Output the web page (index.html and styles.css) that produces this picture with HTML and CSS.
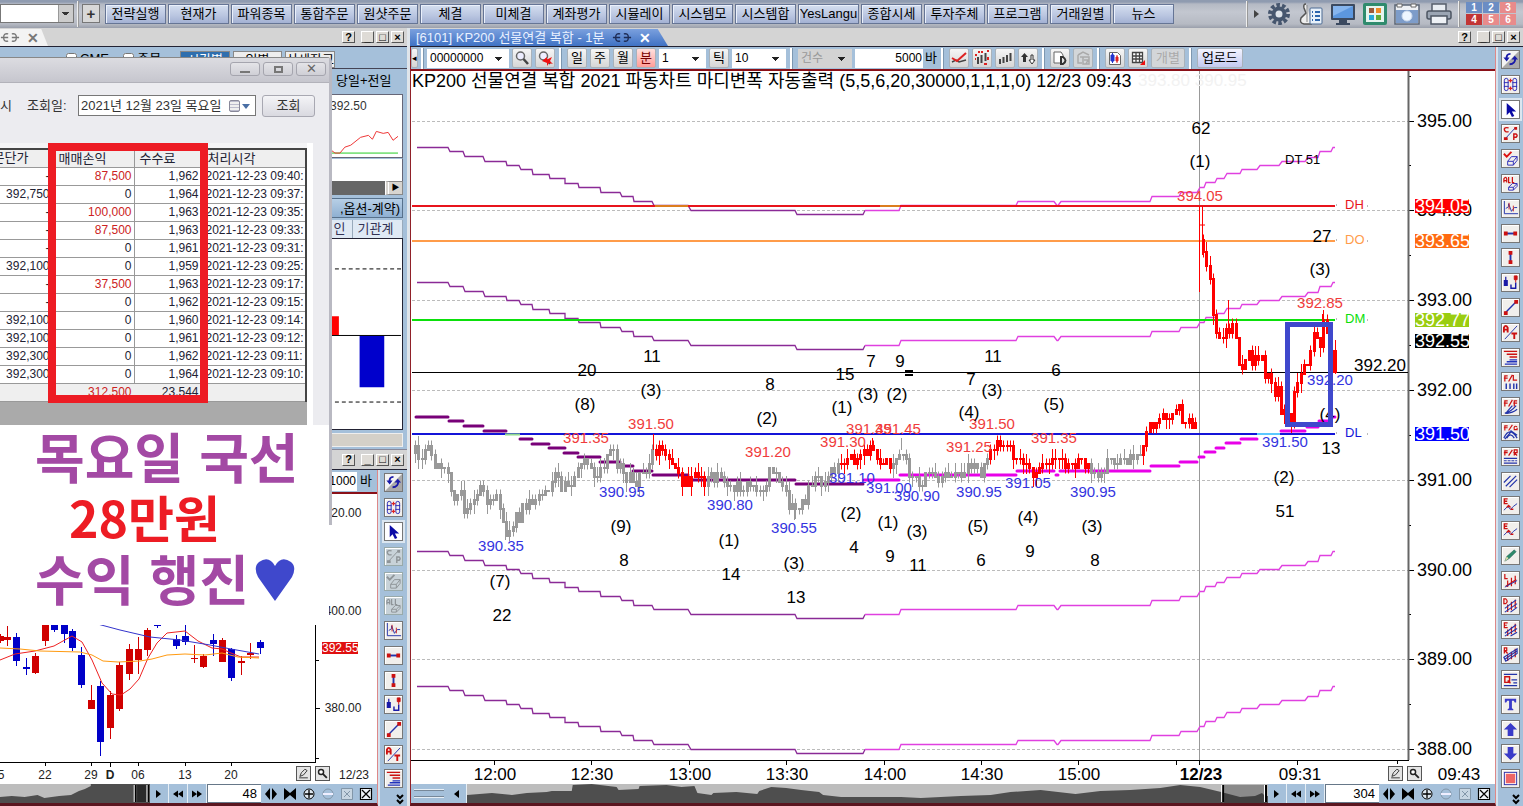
FILE: index.html
```html
<!DOCTYPE html>
<html lang="ko">
<head>
<meta charset="utf-8">
<title>[6101] KP200 선물연결 복합 - 1분</title>
<link rel="stylesheet" href="styles.css">
</head>
<body>
<svg class="sprite" aria-hidden="true">
  <symbol id="i-refresh" viewBox="0 0 18 18"><path d="M0 0H18L0 18Z" fill="#f4f4f4"/><path d="M18 0V18H0Z" fill="#aaa"/><path d="M9 3Q4 3 5 9" fill="none" stroke="#1a1aa8" stroke-width="2"/><path d="M1.500 7H8L5 11ZM10 9h7l-3.500-4Z" fill="#1a1aa8"/><path d="M14 8Q14 14 8 14" fill="none" stroke="#1a1aa8" stroke-width="2"/></symbol>
  <symbol id="i-link" viewBox="0 0 18 18"><g fill="none" stroke="#2b2bb8"><rect x="2.500" y="2.500" width="4" height="13" rx="2"/><rect x="11.500" y="2.500" width="4" height="13" rx="2"/><path d="M2 7h5M2 11h5M11 7h5M11 11h5"/></g><path d="M7 5h4M9 3v4M7 13h4M9 11v4" stroke="#d22" stroke-width="1.300" fill="none"/></symbol>
  <symbol id="i-cursor" viewBox="0 0 18 18"><path d="M5 2V15L8 12L10.500 17L13 16L10.500 11H15Z" fill="#0a0aa5"/></symbol>
  <symbol id="i-cp" viewBox="0 0 18 18"><path d="M3 15L14 3" stroke="#23a"/><path d="M2 13h4v3H2zM13 2h3v3h-3z" fill="#c11"/><path d="M7 3Q2 2 2.500 5T7 7M12.500 16V9.500H15q2 1.500 0 3.500h-2" fill="none" stroke="#c11" stroke-width="1.500"/></symbol>
  <symbol id="i-erasecheck" viewBox="0 0 18 18"><path d="M6 12L10 7H16V11L12 16H6ZM6 12H12L16 7M12 12v4" fill="none" stroke="#2b2bb8"/><path d="M2 4L5 7L10 2" fill="none" stroke="#d11" stroke-width="2"/></symbol>
  <symbol id="i-eraseall" viewBox="0 0 18 18"><path d="M7 13L11 9H16V12L12 16H7ZM7 13H12L16 9M12 13v3" fill="none" stroke="#2b2bb8"/><path d="M2 8V4q2-3 3 0v4M2 6h3M7 2v6h2M11 2v6h2" fill="none" stroke="#c11" stroke-width="1.300"/></symbol>
  <symbol id="i-axis" viewBox="0 0 18 18"><path d="M2.500 1V14.500H17M4 9L7 7V4L10 12L13 8H16" fill="none" stroke="#23a"/><path d="M7.500 3v7M12 6v6" stroke="#c22"/></symbol>
  <symbol id="i-hseg" viewBox="0 0 18 18"><path d="M3 9H15" stroke="#23a" stroke-width="2"/><path d="M2 7h4v4H2zM12 7h4v4h-4z" fill="#c11"/></symbol>
  <symbol id="i-vseg" viewBox="0 0 18 18"><path d="M9 3V15" stroke="#23a" stroke-width="2"/><path d="M7 2h4v4H7zM7 12h4v4H7z" fill="#c11"/></symbol>
  <symbol id="i-ohlc" viewBox="0 0 18 18"><path d="M4 3V12M2.500 7H5.500V12H2.500Z" stroke="#1a1aa8" fill="#1a1aa8" stroke-width="1.300"/><path d="M9.500 11V15H14.500V9" stroke="#1a1aa8" fill="none" stroke-width="1.500"/><path d="M13 2h3v4h-3zM14.500 6v3" fill="#c11" stroke="#c11"/></symbol>
  <symbol id="i-diag" viewBox="0 0 18 18"><path d="M3 15L15 3" stroke="#23a" stroke-width="1.500"/><path d="M2 13h4v4H2zM13 1h4v4h-4z" fill="#c11"/></symbol>
  <symbol id="i-at" viewBox="0 0 18 18"><path d="M3 16L16 2" stroke="#23a"/><path d="M2 9V4Q4 0 6 4V9M2 6H6M10 10H16M13 10V16" fill="none" stroke="#c11" stroke-width="2"/></symbol>
  <symbol id="i-fib" viewBox="0 0 18 18"><path d="M2 2.500H16M5 5.500H16M8 8.500H16" stroke="#c11" stroke-width="1.500"/><path d="M8 11.500H16M5 13.500H16M3 16H16" stroke="#23b" stroke-width="1.500"/></symbol>
  <symbol id="i-fl" viewBox="0 0 18 18"><path d="M3 9V3H6M2 5.500H6M7 9L11 2M12 2V7.500H16" fill="none" stroke="#c11" stroke-width="1.300"/><path d="M4.500 11V17M8.500 11V17M12.500 11V17M15.500 11V17" stroke="#23a" stroke-width="1.500"/></symbol>
  <symbol id="i-ff" viewBox="0 0 18 18"><path d="M3 9V3H6M2 5.500H6M7 9L11 2M13 9V3H16M12 5.500H16" fill="none" stroke="#c11" stroke-width="1.300"/><path d="M3 16Q9 15 15 8M3 16Q10 17 16 12M5 15L11 8" fill="none" stroke="#23a" stroke-width="1.300"/></symbol>
  <symbol id="i-fc" viewBox="0 0 18 18"><path d="M3 8V3H6M2 5H6M7 8L11 2M16 4q-4-2-3 3h3V5" fill="none" stroke="#c11" stroke-width="1.200"/><path d="M2 16Q8 3 16 16M5 16Q9 9 13 16M9 10L3 17M9 8L16 13" fill="none" stroke="#23a" stroke-width="1.300"/></symbol>
  <symbol id="i-fr" viewBox="0 0 18 18"><path d="M3 8V3H6M2 5H6M7 8L11 2M13 8V2H16V5H13L16 8" fill="none" stroke="#c11" stroke-width="1.300"/><path d="M2 11H16M2 16H16" stroke="#23a" stroke-width="1.500"/><path d="M2 13.500H16" stroke="#23a" stroke-dasharray="3 1"/></symbol>
  <symbol id="i-channel" viewBox="0 0 18 18"><path d="M2 10L9 3M4 14L15 3M8 15L16 7" stroke="#23a" stroke-width="1.300"/></symbol>
  <symbol id="i-ewave" viewBox="0 0 18 18"><path d="M2 14L6 10L9 13L12 10L16 7" fill="none" stroke="#23a"/><path d="M6 2H2.500V7H6M2.500 4.500H5.500M5 11l2-2 2 2M9 13h3" fill="none" stroke="#c11" stroke-width="1.500"/></symbol>
  <symbol id="i-pencil" viewBox="0 0 18 18"><path d="M3 15L5 10L13 3L15 5L8 12Z" fill="#2d8a6a" stroke="#255" stroke-width=".5"/><path d="M3 15L5 10L7 12Z" fill="#dda"/></symbol>
  <symbol id="i-lline" viewBox="0 0 18 18"><path d="M3 2V7H6M4 15L15 8M6 9V16M10 6V15M14 4V13" fill="none" stroke="#c11" stroke-width="1.300"/><path d="M3 16L16 9" stroke="#23a"/></symbol>
  <symbol id="i-dline" viewBox="0 0 18 18"><path d="M2 2V7H4Q7 4.500 4 2ZM6 8V16M10 5V14M14 3V12" fill="none" stroke="#c11" stroke-width="1.300"/><path d="M3 12L15 3M3 16L16 7M9 16L16 11" stroke="#23a" stroke-width="1.200"/></symbol>
  <symbol id="i-eline" viewBox="0 0 18 18"><path d="M6 2H2.500V7H6M2.500 4.500H5M6 9V16M10 6V14M14 3V12" fill="none" stroke="#c11" stroke-width="1.300"/><path d="M3 13L15 4M3 16L16 8M9 16L16 12" stroke="#23a" stroke-width="1.200"/></symbol>
  <symbol id="i-rline" viewBox="0 0 18 18"><path d="M2.500 8V2H5V5H3L6 8M6 9V16M10 6V14M14 3V12" fill="none" stroke="#c11" stroke-width="1.300"/><path d="M2 12L16 3V8L4 16Z M3 14L16 5" fill="none" stroke="#23a" stroke-width="1.200"/></symbol>
  <symbol id="i-quad" viewBox="0 0 18 18"><path d="M2 3.500H16M10 9.500H16M2 15.500H16M12 12.500H16" stroke="#23a" stroke-width="1.300"/><path d="M3 6H8V12H3ZM6 10L9 13" fill="none" stroke="#c11" stroke-width="1.500"/></symbol>
  <symbol id="i-text" viewBox="0 0 18 18"><path d="M3 3H15V7H13.500L12.500 5H10.500V13L12 14V15H6V14L7.500 13V5H5.500L4.500 7H3Z" fill="#3b3bc8"/></symbol>
  <symbol id="i-up" viewBox="0 0 18 18"><path d="M9 2L16 9H12V16H6V9H2Z" fill="#3b3bc8"/></symbol>
  <symbol id="i-down" viewBox="0 0 18 18"><path d="M9 16L16 9H12V2H6V9H2Z" fill="#3b3bc8"/></symbol>
  <symbol id="i-rect" viewBox="0 0 18 18"><rect x="2.500" y="2.500" width="13" height="13" fill="#fff" stroke="#33a"/><rect x="4" y="4" width="10" height="10" fill="#e66"/></symbol>
  <symbol id="i-search" viewBox="0 0 18 18"><circle cx="7.500" cy="7" r="4" fill="#eef" stroke="#666" stroke-width="1.500"/><path d="M10.500 10L15 15" stroke="#444" stroke-width="2.500"/></symbol>
  <symbol id="i-searchred" viewBox="0 0 18 18"><circle cx="7.500" cy="7" r="4" fill="#eef" stroke="#666" stroke-width="1.500"/><path d="M10 10L14 15" stroke="#444" stroke-width="2"/><path d="M6 12L11 8V10.500L16 8L14 12L17 15L13 14L11 17V14Z" fill="#e11"/></symbol>
  <symbol id="i-trend" viewBox="0 0 18 18"><path d="M2 13L6 11L9 13L16 11" fill="none" stroke="#444" stroke-width="1.500"/><path d="M2 9L7 12L16 4" fill="none" stroke="#d22" stroke-width="2"/></symbol>
  <symbol id="i-barsred" viewBox="0 0 18 18"><path d="M5 8V15M8.500 6V14M12.500 4V12" stroke="#444" stroke-width="2"/><path d="M2 6h2M5 3h2M8 3h2M2 10h1M14 2h2M11 15h3M15 8v3" stroke="#d22" stroke-width="2"/></symbol>
  <symbol id="i-bars" viewBox="0 0 18 18"><path d="M4 10V15M7.500 8V14M11 6V13M14.500 4V12" stroke="#444" stroke-width="2"/></symbol>
  <symbol id="i-updown" viewBox="0 0 18 18"><path d="M2 8L5.500 4L9 8H7V13H4V8Z" fill="#333"/><path d="M10 11L13 15L16 11H14V6H12V11Z" fill="#fff" stroke="#333"/></symbol>
  <symbol id="i-docd" viewBox="0 0 18 18"><path d="M9 14H3V3H10L12 6V8" fill="#fff" stroke="#666"/><path d="M10 8V15H12Q17 11.500 12 8Z" fill="none" stroke="#333" stroke-width="2"/></symbol>
  <symbol id="i-docr" viewBox="0 0 18 18"><path d="M4 6L9 3L15 6M4 6V14H8M6 8H15V15H9V8M10 11H14L12 15" fill="none" stroke="#aaa" stroke-width="1.500"/></symbol>
  <symbol id="i-candles" viewBox="0 0 18 18"><path d="M3.500 3.500H11.500L14.500 6.500V15.500H3.500Z" fill="#fff" stroke="#666"/><path d="M5 6H8V12H5ZM6.500 4V14" stroke="#23c" fill="#23c"/><path d="M10 8H12V12H10ZM11 6V14" stroke="#d22" fill="#d22"/></symbol>
  <symbol id="i-grid" viewBox="0 0 18 18"><path d="M3.500 3.500H13.500V13.500H3.500ZM3.500 7H13.500M3.500 10H13.500M7 3.500V13.500M10.500 3.500V13.500" fill="#fff" stroke="#444" stroke-width="1.300"/><path d="M16 11V16H11Z" fill="#e11"/></symbol>
  <symbol id="i-play" viewBox="0 0 18 18"><path d="M6 5L11 9L6 13Z" fill="#000"/></symbol>
  <symbol id="i-back" viewBox="0 0 18 18"><path d="M11 5L6 9L11 13Z" fill="#000"/></symbol>
  <symbol id="i-rew" viewBox="0 0 18 18"><path d="M9 5.500L4 9L9 12.500ZM14 5.500L9 9L14 12.500Z" fill="#000"/></symbol>
  <symbol id="i-fwd" viewBox="0 0 18 18"><path d="M4 5.500L9 9L4 12.500ZM9 5.500L14 9L9 12.500Z" fill="#000"/></symbol>
  <symbol id="i-expand" viewBox="0 0 18 18"><path d="M8 3V15L3 9ZM10 3V15L15 9Z" fill="#000"/></symbol>
  <symbol id="i-shrink" viewBox="0 0 18 18"><path d="M3 3V15L9 10L15 15V3L9 8Z" fill="#000"/></symbol>
  <symbol id="i-plus" viewBox="0 0 18 18"><circle cx="9" cy="9" r="5" fill="#dfe8f0" stroke="#000"/><path d="M5 9H13M9 5V13" stroke="#000" stroke-width="1.300"/></symbol>
  <symbol id="i-minus" viewBox="0 0 18 18"><circle cx="9" cy="9" r="5" fill="none" stroke="#8296a8"/><path d="M4 9H14" stroke="#eef" stroke-width="2"/></symbol>
  <symbol id="i-fit" viewBox="0 0 18 18"><path d="M3.500 3.500H14.500V14.500H3.500ZM6 6L12 12M12 6L6 12" fill="#c8d6e2" stroke="#8296a8"/></symbol>
  <symbol id="i-close" viewBox="0 0 18 18"><path d="M3.500 3.500H14.500V14.500H3.500ZM5 5L13 13M13 5L5 13" fill="#eef3f8" stroke="#000" stroke-width="1.200"/></symbol>
  <symbol id="i-edit" viewBox="0 0 18 18"><path d="M3 15H15M4 13L6 8L11 3L14 5L9 11Z" fill="none" stroke="#333" stroke-width="1.300"/></symbol>
  <symbol id="i-key" viewBox="0 0 18 18"><circle cx="7" cy="7" r="3.500" fill="#fff" stroke="#222" stroke-width="2"/><path d="M9.500 9.500L15 15" stroke="#222" stroke-width="2.500"/></symbol>
  <symbol id="i-docks" viewBox="0 0 22 12"><path d="M1 6H5M9 2Q4 1 4 6Q4 11 9 10M5 6H9M13 2Q18 1 18 6Q18 11 13 10M13 6H21" fill="none" stroke="currentColor" stroke-width="1.500"/></symbol>
</svg>

<header class="topbar">
  <select class="top-combo" aria-label="종목"><option></option></select>
  <span class="rule"></span>
  <button class="plus" type="button">+</button>
  <nav class="menu">
    <button type="button">전략실행</button><button type="button">현재가</button><button type="button">파워종목</button><button type="button">통합주문</button><button type="button">원샷주문</button><button type="button">체결</button><button type="button">미체결</button><button type="button">계좌평가</button><button type="button">시뮬레이</button><button type="button">시스템모</button><button type="button">시스템합</button><button type="button">YesLangu</button><button type="button">종합시세</button><button type="button">투자주체</button><button type="button">프로그램</button><button type="button">거래원별</button><button type="button">뉴스</button>
  </nav>
  <div class="utils">
    <span class="rule"></span>
    <svg class="more" viewBox="0 0 6 10"><path d="M0 1L5 5L0 9Z" fill="#444"/></svg>
    <button type="button" aria-label="설정"><svg viewBox="0 0 26 24"><circle cx="13" cy="12" r="9" fill="none" stroke="#46566e" stroke-width="4" stroke-dasharray="3.500 2.150"/><circle cx="13" cy="12" r="5.500" fill="#dde3ea" stroke="#46566e" stroke-width="4"/></svg></button>
    <button type="button" aria-label="목록"><svg viewBox="0 0 26 24"><path d="M8 2Q5 2 6 6L8 11L3 16Q1 21 6 22H14" fill="#eee" stroke="#555" stroke-width="1.500"/><path d="M9 3V20" stroke="#888"/><rect x="12" y="6" width="12" height="16" rx="1" fill="#e8f1fa" stroke="#4c6b93"/><path d="M14 10h1M14 14h1M14 18h1M17 10h5M17 14h5M17 18h5" stroke="#2c65ad" stroke-width="2"/></svg></button>
    <button type="button" aria-label="모니터"><svg viewBox="0 0 26 24"><rect x="1" y="2" width="24" height="16" rx="1" fill="#3c4a60"/><rect x="3" y="4" width="20" height="12" fill="#5c97df"/><path d="M3 4H23L3 14Z" fill="#86b5ee"/><path d="M9 18H17V21H20V23H6V21H9Z" fill="#3c4a60"/></svg></button>
    <button type="button" aria-label="화면 배치"><svg viewBox="0 0 26 24"><rect x="1" y="1" width="24" height="22" rx="2" fill="#2f8b6d"/><rect x="4" y="4" width="18" height="16" fill="#e6f5ef"/><rect x="7" y="6" width="5" height="5" fill="#9a5a3a"/><rect x="14" y="6" width="5" height="5" fill="#f08b28"/><rect x="7" y="13" width="5" height="5" fill="#27a9d8"/><rect x="14" y="13" width="5" height="5" fill="#63ad38"/></svg></button>
    <button type="button" aria-label="캡처"><svg viewBox="0 0 26 24"><rect x="1" y="3" width="24" height="19" fill="#eef1f5" stroke="#5b6575" stroke-width="1.500"/><rect x="2" y="8" width="22" height="13" fill="#7d9cc9"/><path d="M3 2h5v3H3zM17 2h5v3h-5z" fill="#fff" stroke="#666"/><circle cx="13" cy="14" r="5" fill="#eef6ff" stroke="#cbd9ec"/></svg></button>
    <button type="button" aria-label="인쇄"><svg viewBox="0 0 26 24"><path d="M6 2H20V10H6Z" fill="#e9edf2" stroke="#555e6b" stroke-width="1.500"/><rect x="1" y="9" width="24" height="8" rx="2" fill="#9ba5b3" stroke="#4d5663" stroke-width="1.500"/><path d="M5 14H21V22H5Z" fill="#eef1f5" stroke="#4d5663" stroke-width="1.500"/></svg></button>
    <span class="rule"></span>
    <div class="pages"><button type="button" class="b">1</button><button type="button" class="b">2</button><button type="button">3</button><button type="button" class="on">4</button><button type="button">5</button><button type="button">6</button></div>
  </div>
</header>

<main class="desk">
  <section class="left">
    <div class="win upper">
      <div class="strip">
        <div class="tab plain"><svg class="dock"><use href="#i-docks"/></svg><b>✕</b></div>
        <div class="sys"><button type="button">?</button><button type="button">_</button><button type="button">□</button><button type="button">×</button></div>
      </div>
      <div class="opts">
        <label><input type="checkbox">CME</label><label><input type="checkbox">주문</label>
        <button type="button" class="sel">시간별</button><button type="button">일별</button><button type="button">상세잔고</button>
      </div>
      <div class="side">
        <p class="when">당일+전일</p>
        <div class="spark"><span>392.50</span><svg viewBox="0 0 72 63"><path d="M0 59H68" stroke="#2c2"/><path d="M0 56L4 59H9L14 53L20 51L30 43L38 41L42 45L46 37L53 39L58 38L63 46L68 42" fill="none" stroke="#e33"/></svg></div>
        <div class="blank"></div>
        <div class="hscroll"><button type="button">▶</button></div>
        <p class="cap">,옵션-계약)</p>
        <div class="heads"><span>인</span><span>기관계</span></div>
        <svg class="flow" viewBox="0 0 72 192"><path d="M4 30H71M4 165H71" stroke="#000" stroke-dasharray="4 3"/><path d="M0 97.500H71" stroke="#000"/><path d="M0 78H8V97H0Z" fill="#f00"/><path d="M29 98H54V150H29Z" fill="#00c"/></svg>
      </div>
      <div class="foot"></div>
    </div>

    <div class="win lower">
      <div class="strip">
        <div class="sys"><button type="button">?</button><button type="button">_</button><button type="button">□</button><button type="button">×</button></div>
      </div>
      <div class="split">
        <div class="pane">
          <div class="bar end"><input class="num" aria-label="봉 개수" value="1000"><span>바</span></div>
          <div class="plot">
            <svg id="daily" viewBox="0 494 377 290" preserveAspectRatio="xMinYMin meet" role="img" aria-label="일봉 차트"></svg>
            <div class="tools"><button type="button" aria-label="편집"><svg><use href="#i-edit"/></svg></button><button type="button" aria-label="키"><svg><use href="#i-key"/></svg></button></div>
          </div>
          <div class="navbar">
            <svg class="over" viewBox="0 0 152 19" preserveAspectRatio="none"><path d="M0 0H152V19H0Z" fill="#bdbdbd"/><path d="M0 13L12 12L25 13L38 11L45 14L60 12L72 11L80 7L86 5L92 2V0H152V19H0Z" fill="#4e4e4e"/><path d="M139 1H148V18H139Z" fill="#2a2a2a"/><path d="M137 1V18M150 1V18" stroke="#000" stroke-width="2"/><path d="M136 1V18M149 1V18" stroke="#fff"/></svg>
            <button type="button" aria-label="재생"><svg><use href="#i-play"/></svg></button><button type="button" aria-label="뒤로"><svg><use href="#i-rew"/></svg></button><button type="button" aria-label="앞으로"><svg><use href="#i-fwd"/></svg></button>
            <input aria-label="표시 개수" value="48">
            <div class="zoom"><button type="button" aria-label="넓게"><svg><use href="#i-expand"/></svg></button><button type="button" aria-label="좁게"><svg><use href="#i-shrink"/></svg></button><button type="button" aria-label="확대"><svg><use href="#i-plus"/></svg></button><button type="button" aria-label="축소"><svg><use href="#i-minus"/></svg></button><button type="button" aria-label="맞춤"><svg><use href="#i-fit"/></svg></button><button type="button" aria-label="닫기"><svg><use href="#i-close"/></svg></button></div>
          </div>
        </div>
        <aside class="rail" id="rail-left"></aside>
      </div>
    </div>

    <div class="dialog">
      <div class="title"><button type="button" aria-label="최소화"><i class="g-min"></i></button><button type="button" aria-label="최대화"><i class="g-max"></i></button><button type="button" aria-label="닫기">✕</button></div>
      <div class="query"><span class="cut">시</span><label for="day">조회일:</label><div class="date"><input id="day" value="2021년 12월 23일 목요일"><i class="cal"></i><i class="arrow"></i></div><button type="button">조회</button></div>
      <div class="sheet">
        <table>
          <colgroup><col class="c1"><col class="c2"><col class="c3"><col class="c4"></colgroup>
          <thead><tr><th>문단가</th><th>매매손익</th><th>수수료</th><th>처리시각</th></tr></thead>
          <tbody>
            <tr><td>-</td><td class="up">87,500</td><td>1,962</td><td>2021-12-23 09:40:</td></tr>
            <tr><td>392,750</td><td>0</td><td>1,964</td><td>2021-12-23 09:37:</td></tr>
            <tr><td>-</td><td class="up">100,000</td><td>1,963</td><td>2021-12-23 09:35:</td></tr>
            <tr><td>-</td><td class="up">87,500</td><td>1,963</td><td>2021-12-23 09:33:</td></tr>
            <tr><td>-</td><td>0</td><td>1,961</td><td>2021-12-23 09:31:</td></tr>
            <tr><td>392,100</td><td>0</td><td>1,959</td><td>2021-12-23 09:25:</td></tr>
            <tr><td>-</td><td class="up">37,500</td><td>1,963</td><td>2021-12-23 09:17:</td></tr>
            <tr><td>-</td><td>0</td><td>1,962</td><td>2021-12-23 09:15:</td></tr>
            <tr><td>392,100</td><td>0</td><td>1,960</td><td>2021-12-23 09:14:</td></tr>
            <tr><td>392,100</td><td>0</td><td>1,961</td><td>2021-12-23 09:12:</td></tr>
            <tr><td>392,300</td><td>0</td><td>1,962</td><td>2021-12-23 09:11:</td></tr>
            <tr><td>392,300</td><td>0</td><td>1,964</td><td>2021-12-23 09:10:</td></tr>
          </tbody>
          <tfoot><tr><td></td><td class="up">312,500</td><td>23,544</td><td></td></tr></tfoot>
        </table>
      </div>
    </div>
    <div class="mark"></div>
    <div class="note">
      <p>목요일 국선</p>
      <p class="red">28만원</p>
      <p>수익 행진<svg viewBox="0 0 40 42"><path d="M20 42Q10 28 3 18Q-2 8 4 3Q14-4 20 7Q26-4 36 3Q42 8 37 18Q30 28 20 42Z" fill="#3f48cc"/></svg></p>
    </div>
  </section>

  <section class="right">
    <div class="strip">
      <div class="tab active">[6101] KP200 선물연결 복합 - 1분<svg class="dock"><use href="#i-docks"/></svg><b>✕</b></div>
      <div class="sys"><button type="button">?</button><button type="button">_</button><button type="button">□</button><button type="button">×</button></div>
    </div>
    <div class="split">
      <div class="pane">
        <div class="bar">
          <button type="button" class="slim">◂</button>
          <i class="sep"></i>
          <select class="w82" aria-label="종목코드"><option>00000000</option></select>
          <button type="button" aria-label="검색"><svg><use href="#i-search"/></svg></button>
          <button type="button" aria-label="빠른 검색"><svg><use href="#i-searchred"/></svg></button>
          <i class="sep"></i>
          <button type="button">일</button><button type="button">주</button><button type="button">월</button><button type="button" class="on">분</button>
          <select class="w48" aria-label="분 주기"><option>1</option></select>
          <button type="button">틱</button>
          <select class="w54" aria-label="틱 주기"><option>10</option></select>
          <i class="sep"></i>
          <select class="w54 off" aria-label="건수" disabled><option>건수</option></select>
          <div class="pair"><input class="num" aria-label="봉 개수" value="5000"><span>바</span></div>
          <i class="sep"></i>
          <button type="button" aria-label="추세"><svg><use href="#i-trend"/></svg></button><button type="button" aria-label="지표"><svg><use href="#i-barsred"/></svg></button><button type="button" aria-label="봉"><svg><use href="#i-bars"/></svg></button><button type="button" aria-label="정렬"><svg><use href="#i-updown"/></svg></button>
          <i class="sep"></i>
          <button type="button" aria-label="문서"><svg><use href="#i-docd"/></svg></button><button type="button" aria-label="기록" disabled><svg><use href="#i-docr"/></svg></button>
          <i class="sep"></i>
          <button type="button" aria-label="캔들"><svg><use href="#i-candles"/></svg></button><button type="button" aria-label="격자"><svg><use href="#i-grid"/></svg></button>
          <button type="button" class="wide" disabled>개별</button>
          <i class="sep"></i>
          <button type="button" class="wide blue">업로드</button>
        </div>
        <div class="plot">
          <svg id="minute" viewBox="411 71 1084 713" preserveAspectRatio="xMinYMin meet" role="img" aria-label="KP200 1분 차트"></svg>
          <div class="tools"><button type="button" aria-label="편집"><svg><use href="#i-edit"/></svg></button><button type="button" aria-label="키"><svg><use href="#i-key"/></svg></button></div>
        </div>
        <div class="navbar">
          <i class="grip"></i><button type="button" aria-label="이전"><svg><use href="#i-back"/></svg></button>
          <svg class="over" viewBox="465 784 803 19" preserveAspectRatio="none"><path d="M465 784H1268V803H465Z" fill="#bdbdbd"/><path d="M465 795L490 793L510 795L525 793L545 792L550 791L570 791L571 785L590 784L615 787L617 790L637 789L638 786L665 785L680 787L693 786L696 793L710 795L712 793L735 792L756 794L758 791L770 787L785 788L800 790L818 792L822 795L840 797L870 797L900 797L920 798L960 796L990 795L1010 792L1040 790L1075 794L1100 791L1130 790L1160 788L1180 785L1200 787L1221 792L1240 797L1255 796L1262 793L1265 796H1268V803H465Z" fill="#4e4e4e"/><path d="M1224 785H1264V803H1224Z" fill="#2a2a2a" opacity=".35"/><path d="M1223 785V802M1266 785V802" stroke="#000" stroke-width="2"/><path d="M1221.500 785V802M1264.500 785V802" stroke="#fff"/></svg>
          <button type="button" aria-label="재생"><svg><use href="#i-play"/></svg></button><button type="button" aria-label="뒤로"><svg><use href="#i-rew"/></svg></button><button type="button" aria-label="앞으로"><svg><use href="#i-fwd"/></svg></button>
          <input aria-label="표시 개수" value="304">
          <div class="zoom"><button type="button" aria-label="넓게"><svg><use href="#i-expand"/></svg></button><button type="button" aria-label="좁게"><svg><use href="#i-shrink"/></svg></button><button type="button" aria-label="확대"><svg><use href="#i-plus"/></svg></button><button type="button" aria-label="축소"><svg><use href="#i-minus"/></svg></button><button type="button" aria-label="맞춤"><svg><use href="#i-fit"/></svg></button><button type="button" aria-label="닫기"><svg><use href="#i-close"/></svg></button></div>
        </div>
      </div>
      <aside class="rail" id="rail-right"></aside>
    </div>
  </section>
</main>
<script src="app.js"></script>
</body>
</html>
```

FILE: styles.css
```css
* { box-sizing: border-box; }
body {
  margin: 0; height: 100vh; display: flex; flex-direction: column; overflow: hidden;
  background: #d4d4d4; color: #000;
  font: 13px/16px "Liberation Sans", "Noto Sans CJK KR", sans-serif;
}
p { margin: 0; }
button, input, select { font: inherit; color: inherit; margin: 0; padding: 0; border-radius: 0; }
button { display: flex; align-items: center; justify-content: center; white-space: nowrap; }
.sprite { position: absolute; width: 0; height: 0; }

.topbar {
  flex: none; height: 28px; display: flex; align-items: center; padding-bottom: 1px;
  background: linear-gradient(#8f9bb0 0 2px, #b4b9c4 4px, #c3c7d0 12px, #b6bac3 24px, #9a9fab);
}
.rule { width: 2px; height: 26px; background: #eee; border-right: 1px solid #999; }
.top-combo {
  appearance: none; width: 74px; height: 19px; border: 1px solid #777; margin-right: 3px;
  background: linear-gradient(#333, #333) 61px 7px / 7px 1px no-repeat, linear-gradient(#333, #333) 62px 8px / 5px 1px no-repeat, linear-gradient(#333, #333) 63px 9px / 3px 1px no-repeat, linear-gradient(90deg, #fff 57px, #999 57px 58px, #ccc 58px);
}
.plus { width: 18px; height: 19px; margin: 0 5px 0 3px; background: #d8d8d8; border: 1px solid #777; font-weight: bold; font-size: 15px; color: #333; }
.menu { display: flex; gap: 2px; }
.menu button {
  width: 61px; height: 20px; overflow: hidden; border: 1px solid #667595; box-shadow: inset 1px 1px #eaf0fb;
  background: linear-gradient(#d5dff0, #b9c5e0 60%, #a3b1d3);
}
.utils { margin-left: auto; display: flex; align-items: center; gap: 6px; padding-right: 7px; }
.utils > button { width: 26px; height: 24px; border: 0; background: none; }
.utils svg { width: 26px; height: 24px; }
.utils .more { width: 6px; height: 10px; }
.pages { display: grid; grid-template-columns: repeat(3, 16px); gap: 1px; }
.pages button { height: 11px; border: 0; background: #e88b8b; color: #fff; font-size: 10px; line-height: 11px; font-weight: bold; }
.pages .b { background: #6b8dc4; }
.pages .on { background: #c23535; }

.desk { flex: 1; min-height: 0; display: flex; }
.left { flex: none; width: 410px; position: relative; display: flex; flex-direction: column; overflow: hidden; border-right: 3px solid #dfe5ea; box-shadow: inset -1px 0 #4a5a6a; }
.right { flex: 1; min-width: 0; display: flex; flex-direction: column; }
.strip { flex: none; height: 19px; display: flex; align-items: flex-end; background: #d4d4d4; border-bottom: 1px solid #223; }
.sys { margin-left: auto; display: flex; gap: 2px; align-self: center; padding-right: 3px; }
.sys button { width: 13px; height: 12px; background: #dedbd6; border: 1px solid; border-color: #fff #555 #555 #fff; font-size: 11px; line-height: 9px; font-weight: bold; }
.sys button:first-child { margin-right: 4px; }
.tab { height: 17px; display: flex; align-items: center; white-space: nowrap; }
.tab b { font-size: 14px; }
.dock { width: 20px; height: 11px; }
.plain { width: 48px; gap: 7px; background: #f3f3f3; clip-path: polygon(0 0, 86% 0, 100% 100%, 0 100%); color: #777; }
.active { width: 258px; padding-left: 6px; gap: 7px; color: #e9f1ff; background: linear-gradient(#7ba0de, #3f72c4); clip-path: polygon(0 0, 96% 0, 100% 100%, 0 100%); }
.active b { color: #fff; }
.active .dock { color: #1e2c55; }

.win { display: flex; flex-direction: column; }
.upper { flex: none; background: #a5c0da; }
.opts { height: 22px; padding: 4px 72px 0 66px; display: flex; gap: 3px; border-bottom: 1px solid #445; }
.opts label { display: flex; gap: 3px; width: 55px; }
.opts input { width: 11px; height: 11px; margin: 2px 0; }
.opts button { width: 50px; border: 1px solid #888; background: #eee; }
.opts .sel { background: #2f6fae; color: #fff; }
.side { margin: 0 4px 0 331px; display: flex; flex-direction: column; }
.when { height: 25px; padding: 4px 5px; white-space: nowrap; }
.spark { height: 64px; background: #fff; border: 1px solid #667; border-left: 0; position: relative; }
.spark span { position: absolute; top: 3px; left: -1px; font-size: 12px; color: #333; }
.spark svg { display: block; width: 100%; height: 62px; }
.blank { height: 23px; background: #fff; border-right: 1px solid #667; border-top: 1px solid #a5c0da; }
.hscroll { height: 14px; display: flex; justify-content: flex-end; background: #666; }
.hscroll button { width: 18px; border: 1px solid #888; border-left: 4px double #fff; background: #d8d5d0; font-size: 8px; }
.cap { height: 20px; margin-top: 3px; padding: 2px; border: 1px solid #57718c; border-left: 0; background: linear-gradient(#b7cfe6, #8fb0d2); white-space: nowrap; text-align: right; }
.heads { display: grid; grid-template-columns: 22px 1fr; height: 20px; padding-top: 2px; }
.heads span { background: #dfe9f4; border-right: 1px solid #9ab; padding: 1px 4px 0 0; text-align: center; white-space: nowrap; color: #335; }
.flow { display: block; width: 100%; height: 192px; background: #fff; border: 1px solid #223; border-left: 0; }
.foot { height: 14px; margin: 3px 4px 2px 0; background: #d4d0c8; border: 1px solid #eee; }
.lower { flex: 1; min-height: 0; }
.lower .strip { height: 21px; border-top: 1px solid #889; }

.split { flex: 1; min-height: 0; display: flex; background: #a5c0da; }
.pane { flex: 1; min-width: 0; display: flex; flex-direction: column; border-right: 1px solid #d88; border-bottom: 3px solid #5b1620; border-left: 1px solid #902028; }
.left .pane { border-left: 0; }
.bar { flex: none; height: 24px; display: flex; align-items: center; gap: 3px; border-bottom: 2px solid #8a1018; white-space: nowrap; }
.bar.end { justify-content: flex-end; padding-right: 5px; }
.bar button { width: 20px; height: 20px; border: 1px solid #a9b2ba; border-radius: 2px; background: linear-gradient(#f6f6f6, #d6d6d6); }
.bar button svg { width: 18px; height: 18px; }
.bar button:disabled { color: #aaa; background: #d3d6d9; }
.bar .slim { width: 7px; font-size: 9px; }
.bar .on { background: linear-gradient(#ffe0de, #ff9d98); color: #700; }
.bar .wide { width: auto; padding: 0 4px; }
.bar .blue { background: linear-gradient(#f3f4ff, #c3c9f0); }
.sep { width: 3px; height: 21px; margin: 0 2px 0 1px; background: #fff; border-right: 1px solid #7d97b0; }
.slim + .sep { margin: 0; }
.bar select { appearance: none; height: 19px; padding-left: 3px; border: 0; font-size: 12px; background: linear-gradient(#222, #222) right 7px top 8px / 7px 1px no-repeat, linear-gradient(#222, #222) right 8px top 9px / 5px 1px no-repeat, linear-gradient(#222, #222) right 9px top 10px / 3px 1px no-repeat, linear-gradient(#222, #222) right 10px top 11px / 1px 1px no-repeat, #fff; }
.bar select.off { background-color: #d3d3d3; color: #999; opacity: 1; }
.w82 { width: 82px; }
.w48 { width: 47px; }
.w54 { width: 54px; }
.pair { display: flex; align-items: center; gap: 2px; }
.num { width: 68px; height: 19px; border: 0; background: #fff; text-align: right; padding-right: 1px; font-size: 12px; }
.plot { flex: 1; min-height: 0; position: relative; background: #fff; }
.plot > svg { display: block; width: 100%; height: 100%; }
.tools { position: absolute; bottom: 3px; right: 73px; display: flex; gap: 4px; }
.left .tools { right: 47px; }
.tools button { width: 15px; height: 15px; border: 1px solid #555; background: #e4e4e4; }
.tools svg { width: 13px; height: 13px; flex: none; }

.navbar { flex: none; height: 19px; display: flex; align-items: stretch; }
.navbar > button { flex: none; width: 19px; border: 0; border-right: 1px solid #e6eef5; background: none; }
.navbar button svg { width: 18px; height: 18px; flex: none; }
.navbar input { flex: none; width: 54px; border: 1px solid #678; border-right: 0; background: #fff; text-align: right; padding-right: 4px; }
.over { flex: 1; min-width: 0; height: 19px; }
.grip { width: 30px; margin: 5px 4px 5px 3px; border: 1px solid #e6eef5; border-width: 1px 0; box-shadow: inset 0 1px #789, inset 0 -1px #789; }
.zoom { flex: none; display: flex; gap: 1px; width: 116px; padding-left: 1px; }
.zoom button { width: 18px; border: 0; background: none; }

.rail { flex: none; width: 27px; display: flex; flex-direction: column; align-items: center; justify-content: space-between; padding: 3px 0 1px; border-left: 2px solid #d5e2ee; }
.left .rail { width: 29px; }
.rail button { flex: none; width: 19px; height: 19px; border: 1px solid #777; box-shadow: inset 1px 1px #fff; background: #f1efec; }
.rail button.on { background: #fff; outline: 2px solid #dbe6f0; }
.rail button:disabled { background: #c8d2d8; border-color: #9aa; }
.rail button:disabled svg { filter: grayscale(1); opacity: .4; }
.rail svg { width: 17px; height: 17px; flex: none; }
.rail .chev { width: 11px; height: 11px; align-self: flex-end; }

.dialog { position: absolute; left: 0; top: 29px; width: 332px; height: 468px; background: #ececf0; border-top: 1px solid #888; border-right: 3px solid #b9b9c2; border-radius: 0 5px 0 0; }
.title { height: 25px; display: flex; justify-content: flex-end; gap: 3px; padding: 4px 3px 6px 0; background: linear-gradient(#dcdce1, #c6c6ce); border-bottom: 1px solid #b2b2ba; }
.title button { width: 30px; border: 1px solid #a5a5ae; border-radius: 3px; background: linear-gradient(#e4e4e8, #cfcfd6); color: #666; font-size: 13px; }
.g-min { width: 10px; height: 2px; background: #777; margin-top: 5px; }
.g-max { width: 9px; height: 7px; border: 2px solid #777; }
.query { height: 60px; padding: 12px 0 0; display: flex; align-items: flex-start; color: #333; }
.query > span, .query > label { padding-top: 3px; }
.cut { width: 27px; }
.query label { width: 51px; }
.date { width: 178px; height: 21px; display: flex; align-items: center; border: 1px solid #777; background: #fff; }
.date input { width: 150px; border: 0; padding-left: 2px; background: none; }
.cal { width: 11px; height: 12px; border: 1px solid #889; border-radius: 2px; background: repeating-linear-gradient(#bbc 0 1px, #eee 1px 3px); }
.arrow { border: 4px solid transparent; border-top: 5px solid #4a6fa5; margin: 5px 0 0 2px; }
.query > button { width: 53px; height: 22px; margin-left: 6px; border: 1px solid #a8a8b2; border-radius: 3px; background: linear-gradient(#f4f4f7, #d9d9e0); }
.sheet { width: 313px; height: 300px; padding: 5px 6px 0 0; background: linear-gradient(#fff, #fff) right / 6px 100% no-repeat, linear-gradient(#f4f4f6 5px, #aaa 5px); }
table { width: 307px; table-layout: fixed; border-collapse: collapse; font-size: 12px; line-height: 15px; background: #fff; border-top: 2px solid #444; border-right: 2px solid #444; }
.c1 { width: 50px; }
.c2 { width: 84px; }
.c3 { width: 67px; }
th, td { height: 18px; padding: 1px 2px 0 0; border: 1px solid #999; border-left: 0; text-align: right; font-weight: normal; white-space: nowrap; overflow: hidden; color: #223; }
td:first-child { padding-right: 0; }
th { background: #efefef; text-align: left; padding-left: 5px; font-size: 13px; line-height: 14px; }
th:nth-child(2) { padding-left: 8px; }
th:first-child { direction: rtl; text-align: right; padding: 0 21px 0 0; }
td:last-child { text-align: left; padding-left: 4px; }
th:last-child { padding-left: 6px; }
td.up { color: #c22; }
tfoot td { background: #efefef; border-right-color: #efefef; }
.mark { position: absolute; left: 48px; top: 115px; width: 160px; height: 260px; border: 8px solid #ed1c24; }
.note { position: absolute; left: 0; top: 397px; width: 329px; height: 200px; background: #fff; padding-left: 35px; color: #a349a4; font: bold 54px/61px "Noto Sans CJK KR", sans-serif; white-space: nowrap; }
.note .red { color: #ed1c24; padding-left: 34px; font-size: 50px; }
.note svg { width: 40px; height: 42px; margin-left: 6px; }

svg text { font-family: "Liberation Sans", "Noto Sans CJK KR", sans-serif; }
.t-count { font-size: 17px; text-anchor: middle; }
.t-hi, .t-lo { font-size: 15px; text-anchor: middle; fill: #f03c3c; }
.t-lo { fill: #3434e0; }
.t-axis { font-size: 18px; }
.t-head { font-size: 18px; }
.t-ghost { font-size: 17px; fill: #f2f2f2; }
.t-line { font-size: 13px; }
.t-small { font-size: 12px; text-anchor: middle; fill: #222; }
.t-bold { font-weight: bold; }
```

FILE: app.js
```js
const NS = 'http://www.w3.org/2000/svg';

function add(svg, tag, attrs, text) {
  const el = document.createElementNS(NS, tag);
  for (const k in attrs) el.setAttribute(k, attrs[k]);
  if (text !== undefined) el.textContent = text;
  svg.appendChild(el);
  return el;
}

/* drawing tool rails */
const tools = ['refresh', 'link', 'cursor', 'cp', 'erasecheck', 'eraseall', 'axis', 'hseg', 'vseg', 'ohlc', 'diag', 'at', 'fib',
  'fl', 'ff', 'fc', 'fr', 'channel', 'ewave', 'ewave', 'pencil', 'lline', 'dline', 'eline', 'rline', 'quad', 'text', 'up', 'down', 'rect'];
function rail(id, list, off) {
  const box = document.getElementById(id);
  list.forEach((name, i) => {
    const b = document.createElement('button');
    b.type = 'button';
    b.setAttribute('aria-label', name);
    if (i === 2) b.className = 'on';
    b.disabled = off.includes(i);
    add(add(b, 'svg', {}), 'use', { href: '#i-' + name });
    box.appendChild(b);
  });
  const c = add(box, 'svg', { class: 'chev', viewBox: '0 0 11 11' });
  add(c, 'path', { d: 'M1 1L4 4L7 1M1 6L4 9L7 6', fill: 'none', stroke: '#000', 'stroke-width': 2 });
}
rail('rail-left', tools.slice(0, 13), [3, 4, 5]);
rail('rail-right', tools, []);

/* one-minute chart */
const m = document.getElementById('minute');
const py = p => 120.5 + (395 - p) * 89.8;
for (let p = 388; p <= 395; p++) {
  const y = Math.round(py(p)) + 0.5;
  add(m, 'path', { d: `M412 ${y}H1408`, stroke: '#bbb', 'stroke-dasharray': '3 2' });
  add(m, 'path', { d: `M1408 ${y}h6M1408 ${y - 45}h3`, stroke: '#000' });
  add(m, 'text', { x: 1417, y: y + 5.5, class: 't-axis' }, p + '.00');
}
add(m, 'path', { d: 'M1199.5 71V760', stroke: '#999' });
add(m, 'path', { d: 'M1408.5 71V760', stroke: '#666', 'stroke-width': 2 });
add(m, 'path', { d: 'M411 760.5H1409', stroke: '#000' });
['12:00', '12:30', '13:00', '13:30', '14:00', '14:30', '15:00'].forEach((t, i) => {
  const x = Math.round(495 + i * 97.4);
  add(m, 'path', { d: `M${x - 0.5} 760v5`, stroke: '#000' });
  add(m, 'text', { x, y: 780, class: 't-count' }, t);
});
add(m, 'path', { d: 'M1199.5 760v5M1297.5 760v5M1397.5 760v4M1176.5 760v5', stroke: '#000' });
add(m, 'text', { x: 1201, y: 780, class: 't-count t-bold' }, '12/23');
add(m, 'text', { x: 1300, y: 780, class: 't-count' }, '09:31');
add(m, 'text', { x: 1459, y: 780, class: 't-count' }, '09:43');

/* moving band: [from, to, y] */
const band = [[415, 449, 417], [448, 464, 421], [463, 484, 426], [483, 507, 431], [505, 520, 435], [519, 533, 439], [531, 550, 444],
  [548, 566, 448], [563, 579, 453], [577, 601, 457], [599, 621, 462], [620, 634, 466], [632, 653, 471], [652, 689, 475], [689, 796, 480],
  [795, 864, 484], [863, 900, 480], [899, 1017, 475], [1016, 1055, 471], [1055, 1059, 475], [1059, 1151, 471], [1150, 1180, 466], [1179, 1198, 462],
  [1198, 1205, 457], [1204, 1216, 452], [1215, 1225, 448], [1225, 1241, 443], [1240, 1258, 439], [1258, 1280, 435], [1280, 1306, 431],
  [1306, 1319, 427], [1318, 1332, 421], [1331, 1336, 417]];
[-270, -135, 134, 269].forEach(dy => {
  [[0, 16, '#8a2a96'], [16, band.length, '#e040e0']].forEach(([a, b, color]) => {
    let d = '';
    for (let i = a; i < b; i++) {
      const s = band[i];
      d += `${d ? 'L' : 'M'}${s[0] + 2} ${s[2] + dy + 0.5}H${s[1] - 1}`;
    }
    if (a === 0) d += `L${band[16][0] + 2} ${band[16][2] + dy + 0.5}`;
    add(m, 'path', { d, fill: 'none', stroke: color, 'stroke-width': 1.3 });
  });
});

function level(y, color, name) {
  add(m, 'path', { d: `M412 ${y}H1335`, stroke: color, 'stroke-width': 2 });
  add(m, 'text', { x: 1345, y: Math.round(y) + 3, class: 't-line', fill: color }, name);
  add(m, 'path', { d: `M1336 ${y - 1}h1M1367 ${y}h1`, stroke: '#777' });
}
level(206, '#e8141c', 'DH');
level(241, '#ff9c4a', 'DO');
level(320, '#0be00b', 'DM');
level(434, '#1414d8', 'DL');
add(m, 'path', { d: 'M655 206H688M880 206H900', stroke: '#d8a020', 'stroke-width': 1.5 });
add(m, 'path', { d: 'M505 434.5H520', stroke: '#8fd88f', 'stroke-width': 2 });
add(m, 'path', { d: 'M1257 434H1280', stroke: '#5cc8ff', 'stroke-width': 2 });
band.forEach((s, i) => {
  if (s[2] === 435) return;
  add(m, 'path', { d: `M${s[0] + 1} ${s[2]}H${s[1] - 1}`, stroke: i < 16 ? '#780078' : '#e800e8', 'stroke-width': 3, 'stroke-linecap': 'round' });
});
add(m, 'path', { d: 'M412 372.5H1408', stroke: '#000' });

/* intraday path: x, y; a letter switches the colour */
const track = ['g', 415, 453, 423, 455, 430, 447, 436, 470, 443, 463, 449, 478, 452, 493, 460, 488, 466, 515, 470, 505, 478, 490, 484, 497, 490, 505, 496, 500,
  500, 515, 505, 535, 511, 525, 516, 520, 523, 508, 530, 500, 540, 493, 550, 485, 557, 478, 562, 487, 570, 490, 575, 480, 582, 465, 588, 455, 593, 473,
  600, 470, 607, 455, 613, 452, 617, 465, 625, 473, 630, 478, 637, 479, 645, 468, 650, 455, 'r', 653, 445, 663, 453, 672, 465, 677, 478, 685, 482, 693, 480,
  697, 467, 701, 480, 'g', 706, 482, 712, 478, 720, 470, 723, 480, 730, 487, 740, 490, 748, 480, 756, 488, 766, 485, 771, 467, 776, 475, 781, 485, 787, 500,
  795, 515, 803, 502, 810, 485, 815, 475, 822, 478, 835, 475, 'r', 838, 470, 842, 463, 848, 455, 855, 465, 862, 457, 872, 450, 880, 462, 887, 465,
  'g', 891, 470, 896, 460, 901, 445, 906, 465, 911, 478, 920, 485, 928, 470, 935, 483, 940, 485, 945, 473, 955, 478, 965, 472, 972, 465, 982, 475,
  'r', 988, 460, 996, 445, 1005, 450, 1015, 455, 1023, 465, 1033, 470, 1045, 465, 1055, 463, 1058, 452, 1065, 462, 1072, 470, 1082, 460, 1087, 467,
  'g', 1091, 475, 1098, 475, 1105, 467, 1115, 462, 1125, 460, 1135, 458, 'r', 1141, 450, 1147, 435, 1150, 422, 1160, 418, 1172, 415, 1180, 411, 1185, 422, 1196, 425];
const morning = ['r', 1203, 240, 1207, 265, 1211, 300, 1216, 325, 1222, 332, 1228, 322, 1234, 338, 1240, 365, 1246, 362, 1254, 352, 1262, 362, 1266, 380, 1272, 388,
  1278, 392, 1284, 412, 1290, 422, 1294, 398, 1300, 385, 1304, 365, 1309, 348, 1315, 342, 1319, 352, 1322, 328, 1328, 336];
const TICK = 4.5;
let seed = 41;
const rnd = () => (seed = (seed * 16807) % 2147483647) / 2147483647;
function candles(list, jitter) {
  const pts = [];
  let color = '';
  for (let i = 0; i < list.length;) {
    if (typeof list[i] === 'string') color = list[i++] === 'g' ? '#999' : '#f00';
    pts.push([list[i], list[i + 1], color]);
    i += 2;
  }
  let k = 0;
  let prev = pts[0][1];
  for (let x = pts[0][0]; x <= pts[pts.length - 1][0]; x += 3.25) {
    while (k < pts.length - 2 && pts[k + 1][0] < x) k++;
    const [a, b] = [pts[k], pts[k + 1]];
    const y = a[1] + (b[1] - a[1]) * (x - a[0]) / (b[0] - a[0]);
    const close = Math.round((y + (rnd() - 0.5) * jitter) / TICK) * TICK;
    const top = Math.round(Math.min(prev, close) - 1);
    const bottom = Math.round(Math.max(prev, close) + 1);
    const up = Math.round(rnd() * 2) * TICK;
    const down = Math.round(rnd() * 2) * TICK;
    const X = Math.round(x);
    const c = x >= b[0] ? b[2] : a[2];
    add(m, 'path', { d: `M${X + 0.5} ${top - up}V${bottom + down}`, stroke: c });
    add(m, 'rect', { x: X - 1, y: top, width: 3, height: bottom - top, fill: c });
    prev = close;
  }
}
candles(track, 13);
candles(morning, 24);
add(m, 'path', { d: 'M653.5 434V450M1199.5 206V292M1202.5 206V255M1199.5 225H1205M1228.5 300V330M1322.5 314V325M872.5 438V450M1335.5 340V374', stroke: '#f00' });
add(m, 'path', { d: 'M505.5 525V540M901.5 438V450M794.5 510V520', stroke: '#999' });
add(m, 'rect', { x: 1333, y: 350, width: 4, height: 23, fill: '#f00' });

const labels = {
  't-hi': [['391.35', 586, 438], ['391.50', 651, 424], ['391.20', 768, 452], ['391.30', 843, 442], ['391.45', 869, 429], ['391.45', 898, 429],
    ['391.25', 969, 447], ['391.50', 992, 424], ['391.35', 1054, 438], ['394.05', 1200, 196], ['392.85', 1320, 303]],
  't-lo': [['390.35', 501, 546], ['390.95', 622, 492], ['390.80', 730, 505], ['390.55', 794, 528], ['391.10', 852, 478], ['391.00', 889, 488],
    ['390.90', 917, 496], ['390.95', 979, 492], ['391.05', 1028, 483], ['390.95', 1093, 492], ['391.50', 1285, 442], ['392.20', 1330, 380]],
  't-count': [['11', 652, 356], ['20', 587, 370], ['(3)', 651, 390], ['(8)', 585, 404], ['8', 770, 384], ['(2)', 767, 418], ['15', 845, 374], ['(1)', 842, 407],
    ['7', 871, 361], ['9', 900, 361], ['(3)', 868, 394], ['(2)', 897, 394], ['7', 971, 379], ['11', 993, 356], ['(3)', 992, 390], ['(4)', 969, 412],
    ['6', 1056, 370], ['(5)', 1054, 404], ['(9)', 621, 526], ['8', 624, 560], ['(1)', 729, 540], ['14', 731, 574], ['(3)', 794, 563], ['13', 796, 597],
    ['(2)', 851, 513], ['4', 854, 547], ['(1)', 888, 522], ['9', 890, 556], ['(3)', 917, 531], ['11', 918, 565], ['(5)', 978, 526], ['6', 981, 560],
    ['(4)', 1028, 517], ['9', 1030, 551], ['(3)', 1092, 526], ['8', 1095, 560], ['(7)', 500, 581], ['22', 502, 615], ['62', 1201, 128], ['(1)', 1200, 161],
    ['27', 1322, 236], ['(3)', 1320, 269], ['(4)', 1330, 414], ['13', 1331, 448], ['(2)', 1284, 477], ['51', 1285, 511], ['392.20', 1380, 365]]
};
for (const cls in labels) labels[cls].forEach(([t, x, y]) => add(m, 'text', { x, y: y + (cls === 't-count' ? 6 : 5), class: cls }, t));
add(m, 'text', { x: 1285, y: 164, class: 't-line' }, 'DT 51');
add(m, 'path', { d: 'M905 371H913M905 375H913', stroke: '#000', 'stroke-width': 2 });
add(m, 'rect', { x: 1287.5, y: 324.5, width: 43, height: 100, fill: 'none', stroke: '#3f48cc', 'stroke-width': 5 });

[['394.05', 206, '#f00'], ['393.65', 241, '#ff6a10'], ['392.77', 320, '#9acd10'], ['392.55', 341, '#000'], ['391.50', 434, '#00f']].forEach(([t, y, c]) => {
  add(m, 'rect', { x: 1415, y: y - 7, width: 54, height: 14, fill: c });
  add(m, 'text', { x: 1415, y: y + 6, class: 't-axis', fill: '#fff' }, t);
});
add(m, 'text', { x: 412, y: 87, class: 't-head' }, 'KP200 선물연결 복합 2021 파동차트 마디변폭 자동출력  (5,5,6,20,30000,1,1,1,0) 12/23 09:43');
add(m, 'text', { x: 1138, y: 86, class: 't-ghost' }, '393.80 390.95');

/* daily chart */
const d = document.getElementById('daily');
add(d, 'path', { d: 'M315.5 494V762M0 762.5H316M315 660.5h4M315 708.5h5M315 758.5h4M45.5 762v4M91.5 762v4M110.5 762v5M138.5 762v4M185.5 762v4M231.5 762v4', stroke: '#000', fill: 'none' });
[['420.00', 343, 517], ['400.00', 343, 615], ['380.00', 343, 712], ['5', 1, 779], ['22', 45, 779], ['29', 91, 779], ['06', 138, 779], ['13', 185, 779], ['20', 231, 779], ['12/23', 354, 779]]
  .forEach(([t, x, y]) => add(d, 'text', { x, y, class: 't-small' }, t));
add(d, 'text', { x: 110, y: 779, class: 't-small t-bold' }, 'D');
add(d, 'rect', { x: 322, y: 642, width: 36, height: 12, fill: '#e01010' });
add(d, 'text', { x: 322, y: 652, 'font-size': 12, fill: '#fff' }, '392.55');
/* x, body top, body bottom, wick top, wick bottom, rising */
[[0, 636, 641, 634, 643, 1], [7, 637, 640, 626, 646, 1], [16, 637, 661, 633, 666, 0], [26, 667, 669, 658, 675, 0], [35, 656, 673, 653, 674, 1], [45, 620, 641, 620, 646, 1],
  [54, 620, 630, 620, 632, 0], [64, 620, 634, 620, 643, 0], [72, 631, 648, 629, 651, 0], [81, 655, 685, 647, 688, 0], [91, 700, 709, 685, 709, 1], [100, 686, 742, 681, 756, 0],
  [110, 695, 728, 691, 739, 1], [119, 665, 709, 662, 711, 1], [129, 649, 674, 644, 680, 1], [138, 649, 660, 637, 674, 1], [147, 630, 650, 628, 656, 1], [157, 620, 626, 618, 628, 0],
  [176, 639, 646, 635, 649, 0], [185, 636, 642, 625, 645, 0], [194, 658, 659, 645, 663, 1], [203, 656, 667, 654, 668, 1], [213, 640, 644, 634, 656, 0], [222, 640, 662, 638, 662, 1],
  [231, 649, 678, 648, 681, 0], [241, 661, 663, 656, 675, 1], [250, 653, 655, 643, 659, 1], [260, 642, 648, 640, 654, 0]].forEach(([x, t, b, wt, wb, up]) => {
  const c = up ? '#d00000' : '#0000c8';
  add(d, 'path', { d: `M${x}.5 ${wt}V${wb}`, stroke: c });
  add(d, 'rect', { x: x - 3, y: t, width: 7, height: b - t, fill: c });
});
add(d, 'path', { d: 'M0 660L15 654L35 651L54 646L63 641L72 636L82 642L92 660L102 683L112 694L121 695L130 689L139 679L148 658L157 643L167 633L185 631L198 641L212 648L222 649L231 653L241 657L259 657', fill: 'none', stroke: '#e22' });
add(d, 'path', { d: 'M0 648L20 649L40 651L80 652L92 655L103 661L118 662L140 661L152 659L167 655L185 654L205 655L222 653L238 657L259 658', fill: 'none', stroke: '#ff9a10' });
add(d, 'path', { d: 'M90 622L120 630L150 637L180 640L210 645L231 649L259 654', fill: 'none', stroke: '#33c' });
```
